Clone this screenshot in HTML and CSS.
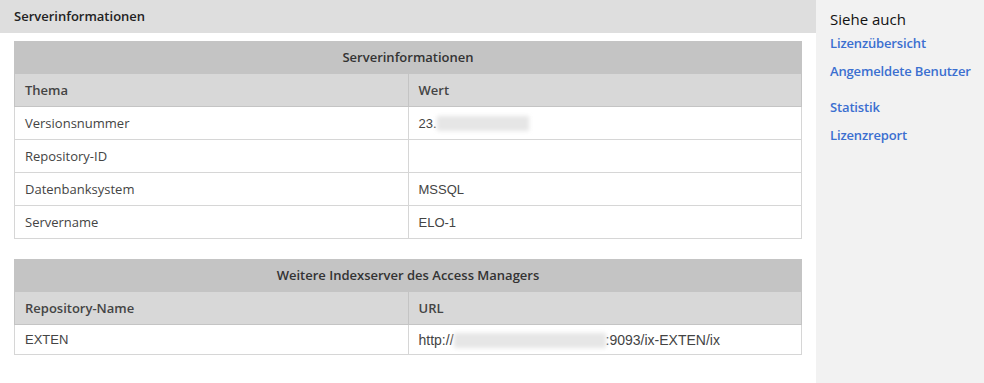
FILE: index.html
```html
<!DOCTYPE html>
<html lang="de">
<head>
  <meta charset="UTF-8" />
  <title>Serverinformationen</title>
  <link rel="stylesheet" href="styles.css">
</head>
<body>
  <div class="page">
    <main class="content">
      <div class="title-bar">Serverinformationen</div>

      <table class="info">
        <caption>Serverinformationen</caption>
        <thead>
          <tr><th>Thema</th><th>Wert</th></tr>
        </thead>
        <tbody>
          <tr><td>Versionsnummer</td><td class="val">23.<span class="blur" style="width:92px"></span></td></tr>
          <tr><td>Repository-ID</td><td class="val"></td></tr>
          <tr><td>Datenbanksystem</td><td class="val">MSSQL</td></tr>
          <tr><td>Servername</td><td class="val">ELO-1</td></tr>
        </tbody>
      </table>

      <table class="info">
        <caption>Weitere Indexserver des Access Managers</caption>
        <thead>
          <tr><th>Repository-Name</th><th>URL</th></tr>
        </thead>
        <tbody>
          <tr class="short"><td class="val">EXTEN</td><td class="val url">http://<span class="blur" style="width:152px"></span>:9093/ix-EXTEN/ix</td></tr>
        </tbody>
      </table>
    </main>

    <aside class="sidebar">
      <h2>Siehe auch</h2>
      <a href="#">Lizenzübersicht</a>
      <a href="#">Angemeldete Benutzer</a>
      <a href="#" class="gap">Statistik</a>
      <a href="#">Lizenzreport</a>
    </aside>
  </div>
</body>
</html>
```

FILE: styles.css
```css
:root {
  --text: #3a3a3a;
  --caption: #c4c4c4;
  --head: #d8d8d8;
  --line: #d6d6d6;
  --link: #3b6fd0;
  --side: #f2f2f2;
}

body {
  margin: 0;
  font-family: 'Open Sans', 'Noto Sans', sans-serif;
  font-size: 13px;
  color: var(--text);
  background: #fff;
}

.page {
  display: flex;
  height: 383px;
}

.content {
  width: 816px;
}

.title-bar {
  background: #dedede;
  height: 33px;
  line-height: 33px;
  padding-left: 14px;
  font-weight: 600;
  color: #222;
}

table.info {
  width: 788px;
  margin: 8px 14px 20px;
  border-collapse: collapse;
  table-layout: fixed;
}

caption {
  background: var(--caption);
  height: 32px;
  line-height: 32px;
  font-weight: 600;
  color: #333;
}

th {
  background: var(--head);
  text-align: left;
  font-weight: 600;
  height: 32px;
  padding: 0 10px;
  border: 1px solid #c4c4c4;
  color: #444;
}

td {
  height: 32px;
  padding: 0 10px;
  border: 1px solid var(--line);
  color: #444;
}

tr.short td {
  height: 29px;
}

td.val {
  font-family: 'Liberation Sans', Arial, sans-serif;
  font-size: 13px;
}

td.url {
  font-size: 14px;
}

.blur {
  display: inline-block;
  height: 15px;
  vertical-align: -3px;
  background: #e6e6e6;
  filter: blur(2px);
}

.sidebar {
  flex: 1;
  background: var(--side);
  padding: 10px 0 10px 14px;
  display: flex;
  flex-direction: column;
  white-space: nowrap;
}

.sidebar h2 {
  margin: 0 0 1px;
  font-size: 15px;
  font-weight: normal;
  color: #111;
  line-height: 18px;
}

.sidebar a {
  color: var(--link);
  font-weight: 600;
  text-decoration: none;
  line-height: 28px;
  letter-spacing: -0.15px;
}

.sidebar a.gap {
  margin-top: 8px;
}
```
